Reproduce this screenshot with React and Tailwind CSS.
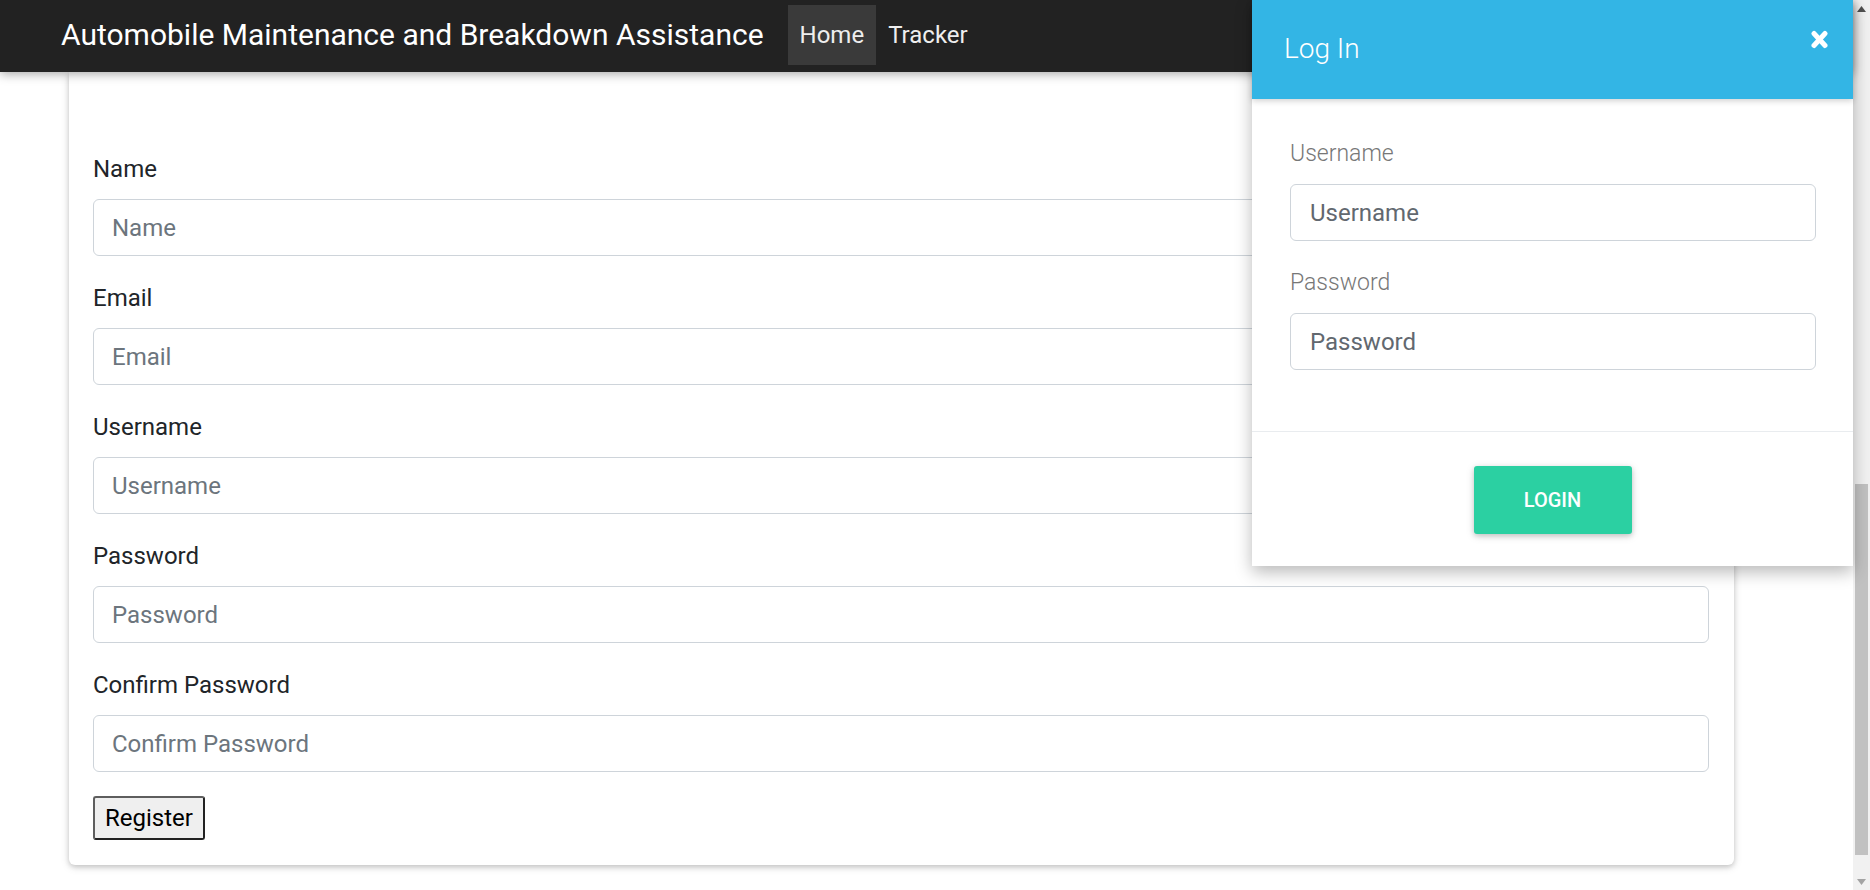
import React from "react";

const fields = ["Name", "Email", "Username", "Password", "Confirm Password"];

function CloseIcon() {
  return (
    <svg width="17" height="19" viewBox="0 0 17 19" className="block">
      <line x1="3" y1="3.5" x2="14" y2="15.5" stroke="#fff" strokeWidth="5" strokeLinecap="round" />
      <line x1="14" y1="3.5" x2="3" y2="15.5" stroke="#fff" strokeWidth="5" strokeLinecap="round" />
    </svg>
  );
}

export default function App() {
  return (
    <div className="flex h-[890px] w-[1870px] overflow-hidden bg-white font-['Roboto','Liberation_Sans',sans-serif]">
      <div className="relative flex min-w-0 flex-1 flex-col">
        <nav className="relative z-10 flex h-[72px] shrink-0 items-start bg-[#222222] pl-[61px] pt-[5px] shadow-[0_2px_10px_rgba(0,0,0,0.35)]">
          <span className="mr-[24px] mt-[7px] text-[30px] leading-[45px] text-white">
            Automobile Maintenance and Breakdown Assistance
          </span>
          <a className="flex h-[60px] items-center bg-[#3a3a3a] px-[12px] pb-[1px] text-[24px] text-[#eeeeee]">Home</a>
          <a className="flex h-[60px] items-center px-[12px] pb-[1px] text-[24px] text-[#eeeeee]">Tracker</a>
        </nav>

        <div className="ml-[69px] w-[1665px] rounded-b-[6px] bg-white pb-[25px] pl-[24px] pr-[25px] pt-[79px] shadow-[0_2px_5px_rgba(0,0,0,0.16),0_2px_10px_rgba(0,0,0,0.12)]">
          {fields.map((f) => (
            <div key={f} className="mb-[24px]">
              <label className="mb-[12px] block text-[24px] leading-[36px] text-[#212529]">{f}</label>
              <input
                placeholder={f}
                className="block h-[57px] w-full rounded-[6px] border border-[#ced4da] bg-white px-[18px] text-[24px] text-[#495057] outline-none placeholder:text-[#6c757d]"
              />
            </div>
          ))}
          <button className="mt-[1px] flex h-[44px] items-center rounded-[3px] border-2 border-[#222222] border-l-[#5e5e5e] border-t-[#5e5e5e] bg-[#efefef] px-[10px] text-[24px] leading-[28px] text-black">
            Register
          </button>
        </div>

        <div className="absolute right-0 top-0 z-20 w-[601px] bg-white shadow-[0_6px_16px_rgba(0,0,0,0.28)]">
          <div className="relative flex h-[99px] items-start justify-between bg-[#33b5e5] pl-[32px] pr-[25px] pt-[28px] shadow-[0_2px_6px_rgba(0,0,0,0.18)]">
            <h4 className="text-[28px] font-light leading-[42px] text-white">Log In</h4>
            <button className="mt-[2px]">
              <CloseIcon />
            </button>
          </div>
          <div className="pb-[37px] pl-[38px] pr-[37px] pt-[37px]">
            {["Username", "Password"].map((f) => (
              <div key={f} className="mb-[24px]">
                <label className="mb-[12px] block text-[23px] font-light leading-[36px] text-[#777777]">{f}</label>
                <input
                  placeholder={f}
                  className="block h-[57px] w-full rounded-[6px] border border-[#ced4da] bg-white px-[19px] text-[24px] text-[#495057] outline-none placeholder:text-[#62686f]"
                />
              </div>
            ))}
          </div>
          <div className="flex justify-center border-t border-[#e9ecef] pb-[32px] pt-[34px]">
            <button className="flex h-[68px] w-[158px] items-center justify-center rounded-[3px] bg-[#2bd0a2] text-[20px] font-medium uppercase text-white shadow-[0_2px_5px_rgba(0,0,0,0.16),0_2px_10px_rgba(0,0,0,0.12)]">
              Login
            </button>
          </div>
        </div>
      </div>

      <div className="flex w-[17px] shrink-0 flex-col bg-[#f1f1f1]">
        <div className="flex h-[17px] shrink-0 items-center justify-center">
          <svg width="9" height="6" viewBox="0 0 9 6">
            <path d="M4.5 0 L9 6 L0 6 Z" fill="#505050" />
          </svg>
        </div>
        <div className="h-[467px] shrink-0" />
        <div className="mx-[2px] h-[371px] shrink-0 bg-[#c1c1c1]" />
        <div className="flex-1" />
        <div className="flex h-[17px] shrink-0 items-center justify-center">
          <svg width="9" height="6" viewBox="0 0 9 6">
            <path d="M0 0 L9 0 L4.5 6 Z" fill="#a3a3a3" />
          </svg>
        </div>
      </div>
    </div>
  );
}
